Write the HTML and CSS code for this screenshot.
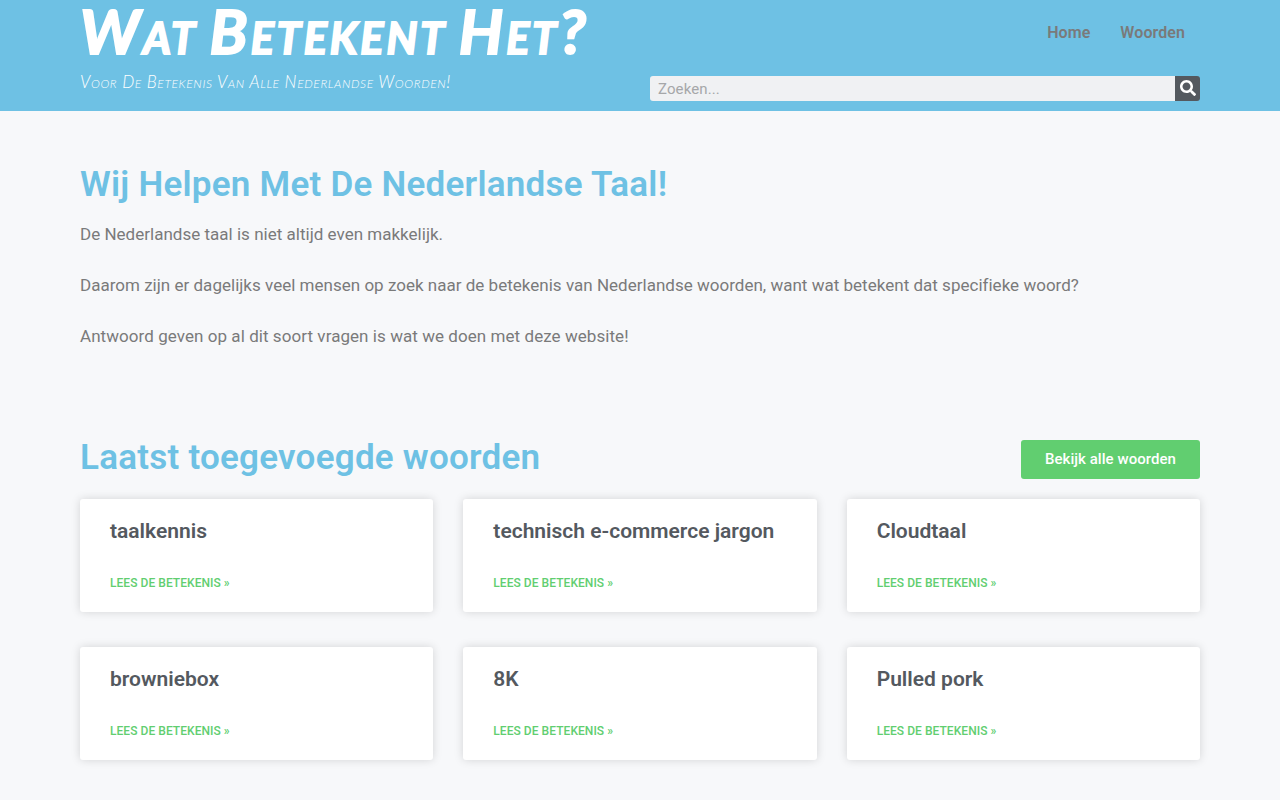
FILE: index.html
```html
<!DOCTYPE html>
<html lang="nl">
<head>
    <meta charset="UTF-8">
    <meta name="viewport" content="width=device-width, initial-scale=1.0">
    <title>Wat Betekent Het?</title>
    <link rel="stylesheet" href="styles.css">
</head>
<body>
    <header class="site-header">
        <div class="container header-inner">
            <div class="branding">
                <h1 class="site-title"><a href="#">Wat Betekent Het?</a></h1>
                <p class="tagline">Voor De Betekenis Van Alle Nederlandse Woorden!</p>
            </div>
            <div class="header-right">
                <nav class="menu">
                    <a href="#">Home</a>
                    <a href="#">Woorden</a>
                </nav>
                <form class="search">
                    <input type="search" placeholder="Zoeken..." aria-label="Zoeken">
                    <button type="submit" aria-label="Zoeken">
                        <svg viewBox="0 0 512 512" width="16" height="16"><path fill="currentColor" d="M505 442.7L405.3 343c-4.5-4.5-10.6-7-17-7H372c27.6-35.3 44-79.7 44-128C416 93.1 322.9 0 208 0S0 93.1 0 208s93.1 208 208 208c48.3 0 92.7-16.4 128-44v16.3c0 6.4 2.5 12.5 7 17l99.7 99.7c9.4 9.4 24.6 9.4 33.9 0l28.3-28.3c9.4-9.4 9.4-24.6.1-34zM208 336c-70.7 0-128-57.2-128-128 0-70.7 57.2-128 128-128 70.7 0 128 57.2 128 128 0 70.7-57.2 128-128 128z"/></svg>
                    </button>
                </form>
            </div>
        </div>
    </header>

    <main class="container">
        <section class="intro">
            <h2>Wij Helpen Met De Nederlandse Taal!</h2>
            <p>De Nederlandse taal is niet altijd even makkelijk.</p>
            <p>Daarom zijn er dagelijks veel mensen op zoek naar de betekenis van Nederlandse woorden, want wat betekent dat specifieke woord?</p>
            <p>Antwoord geven op al dit soort vragen is wat we doen met deze website!</p>
        </section>

        <section class="latest">
            <div class="latest-head">
                <h2>Laatst toegevoegde woorden</h2>
                <a class="button" href="#">Bekijk alle woorden</a>
            </div>
            <div class="cards">
                <article class="card">
                    <h3>taalkennis</h3>
                    <a href="#">Lees de betekenis »</a>
                </article>
                <article class="card">
                    <h3>technisch e-commerce jargon</h3>
                    <a href="#">Lees de betekenis »</a>
                </article>
                <article class="card">
                    <h3>Cloudtaal</h3>
                    <a href="#">Lees de betekenis »</a>
                </article>
                <article class="card">
                    <h3>browniebox</h3>
                    <a href="#">Lees de betekenis »</a>
                </article>
                <article class="card">
                    <h3>8K</h3>
                    <a href="#">Lees de betekenis »</a>
                </article>
                <article class="card">
                    <h3>Pulled pork</h3>
                    <a href="#">Lees de betekenis »</a>
                </article>
            </div>
        </section>
    </main>
</body>
</html>
```
FILE: styles.css
```css
* {
    box-sizing: border-box;
}
body {
    margin: 0;
    background-color: #f7f8fa;
    color: #7a7a7a;
    font-family: Roboto, sans-serif;
    font-size: 17px;
}
h1, h2, h3, p {
    margin: 0;
}
a {
    text-decoration: none;
}
.container {
    width: 1120px;
    margin: 0 auto;
}
.site-header {
    height: 111px;
    background-color: #6ec1e4;
}
.header-inner {
    display: flex;
    justify-content: space-between;
}
.branding {
    width: 550px;
    white-space: nowrap;
    font-family: "Rock Salt", Lato, cursive;
    font-variant: small-caps;
    color: #fff;
}
.site-title {
    font-size: 62px;
    line-height: 60px;
    font-weight: 700;
    font-style: italic;
    letter-spacing: 3px;
    word-spacing: -5px;
    -webkit-text-stroke: 2px #fff;
}
.site-title a {
    display: block;
    color: #fff;
}
.tagline {
    padding-top: 10px;
    font-size: 17px;
    line-height: 24px;
    font-weight: 300;
    font-style: italic;
    letter-spacing: 0.62px;
}
.header-right {
    width: 550px;
}
.menu {
    display: flex;
    justify-content: flex-end;
    gap: 30px;
    padding: 23px 15px 0 0;
    font-size: 16px;
    line-height: 20px;
    font-weight: 600;
    letter-spacing: 0.08px;
}
.menu a {
    color: #7a7a7a;
}
.search {
    display: flex;
    height: 25px;
    margin-top: 33px;
    border-radius: 3px;
    overflow: hidden;
}
.search input {
    flex: 1;
    min-width: 0;
    padding: 0 8px;
    border: 0;
    background-color: #f0f1f3;
    font-family: inherit;
    font-size: 15px;
    letter-spacing: 0.1px;
    color: #7a7a7a;
}
.search input::placeholder {
    color: #a6a7a9;
}
.search button {
    display: flex;
    align-items: center;
    justify-content: center;
    width: 25px;
    padding: 0 0 2px;
    border: 0;
    background-color: #54595f;
    color: #fff;
}
h2 {
    color: #6ec1e4;
    font-size: 35px;
    line-height: 35px;
    font-weight: 600;
    letter-spacing: 0.24px;
}
.intro {
    padding-top: 56px;
}
.intro p {
    margin-bottom: 25px;
    line-height: 26px;
    letter-spacing: 0.015px;
}
.intro p:last-child {
    letter-spacing: 0.06px;
}
.intro h2 {
    margin-bottom: 19px;
}
.latest {
    padding: 66px 0 40px;
}
.latest-head {
    display: flex;
    justify-content: space-between;
}
.button {
    padding: 12px 24px;
    border-radius: 3px;
    background-color: #61ce70;
    color: #fff;
    font-size: 15px;
    line-height: 15px;
    font-weight: 500;
    letter-spacing: 0.05px;
}
.cards {
    display: grid;
    grid-template-columns: repeat(3, 1fr);
    gap: 35px 30px;
    margin-top: 20px;
}
.card {
    height: 113px;
    padding: 20px 30px 0;
    border-radius: 3px;
    background-color: #fff;
    box-shadow: 0 0 10px 0 rgba(0, 0, 0, 0.15);
}
.card h3 {
    margin-bottom: 33px;
    color: #54595f;
    font-size: 21px;
    line-height: 25px;
    font-weight: 600;
}
.card a {
    display: block;
    color: #61ce70;
    font-size: 12px;
    line-height: 12px;
    font-weight: 500;
    letter-spacing: 0.05px;
    text-transform: uppercase;
}
```
